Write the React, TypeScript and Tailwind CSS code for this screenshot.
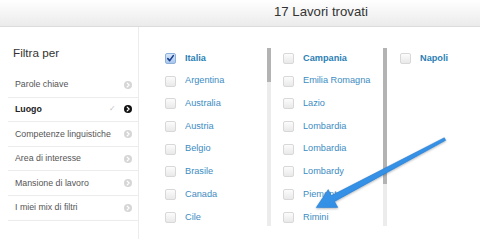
import React from "react";

const font = { fontFamily: '"Liberation Sans", Arial, sans-serif' };

function CircleArrow({ active }: { active?: boolean }) {
  return (
    <svg width="8" height="8" viewBox="0 0 8 8" className="shrink-0">
      <circle cx="4" cy="4" r="4" fill={active ? "#111111" : "#d6d6d6"} />
      <path d="M3.2 2.1 L5.1 4 L3.2 5.9" stroke="#ffffff" strokeWidth="1.3" fill="none" strokeLinecap="round" strokeLinejoin="round" />
    </svg>
  );
}

function Checkbox({ checked }: { checked?: boolean }) {
  if (checked) {
    return (
      <div className="w-[11px] h-[11px] rounded-[2px] border border-[#8fb0d8] bg-gradient-to-b from-[#d6e6f8] to-[#a9c8ee] flex items-center justify-center shrink-0">
        <svg width="9" height="9" viewBox="0 0 9 9">
          <path d="M1.8 4.6 L3.7 6.6 L7.3 1.6" stroke="#1b3d8c" strokeWidth="1.6" fill="none" strokeLinecap="round" strokeLinejoin="round" />
        </svg>
      </div>
    );
  }
  return <div className="w-[11px] h-[11px] rounded-[2px] border border-[#d8d8d8] bg-gradient-to-b from-[#fcfcfc] to-[#e9e9e9] shrink-0" />;
}

function Opt({ label, bold, checked }: { label: string; bold?: boolean; checked?: boolean }) {
  return (
    <div className="h-[22.7px] flex items-center">
      <Checkbox checked={checked} />
      <span className={`ml-[9px] text-[9.2px] leading-none ${bold ? "font-bold text-[#2d7fb5]" : "text-[#3d8cc2]"}`}>{label}</span>
    </div>
  );
}

function Scroll({ thumb }: { thumb: number }) {
  return (
    <div className="w-[4px] mt-[1px] h-[178px] bg-[#ececec] flex flex-col shrink-0">
      <div className="w-full bg-[#b3b3b3]" style={{ height: thumb }} />
    </div>
  );
}

const sideItems = [
  "Parole chiave",
  "Luogo",
  "Competenze linguistiche",
  "Area di interesse",
  "Mansione di lavoro",
  "I miei mix di filtri",
];

export default function App() {
  const col1 = ["Argentina", "Australia", "Austria", "Belgio", "Brasile", "Canada", "Cile"];
  const col2 = ["Emilia Romagna", "Lazio", "Lombardia", "Lombardia", "Lombardy", "Piemonte", "Rimini"];
  return (
    <div className="relative w-[480px] h-[239px] overflow-hidden bg-white" style={font}>
      <div className="h-[27px] bg-gradient-to-b from-[#ffffff] to-[#ebebeb] border-b border-[#dcdcdc] flex items-center pl-[274px]">
        <span className="text-[13.2px] text-[#333333] leading-none -mt-[3px]">17 Lavori trovati</span>
      </div>
      <div className="flex h-[212px]">
        <div className="w-[139px] border-r border-[#ececec] shrink-0">
          <div className="pl-[13px] pt-[19px] h-[46px] text-[11.7px] text-[#333333] leading-[14px]">Filtra per</div>
          <div className="pl-[8px]">
            {sideItems.map((it, i) => (
              <div key={it} className="h-[24.6px] flex items-center pl-[7px] pr-[6px] border-b border-[#ececec]">
                <span className={`flex-1 text-[8.8px] leading-none ${i === 1 ? "font-bold text-[#222222]" : "text-[#555555]"}`}>{it}</span>
                {i === 1 && <span className="text-[8px] text-[#c4c4c4] mr-[8px] leading-none">✓</span>}
                <CircleArrow active={i === 1} />
              </div>
            ))}
          </div>
        </div>
        <div className="flex pt-[20px]">
          <div className="w-[128px] pl-[26px]">
            <Opt label="Italia" bold checked />
            {col1.map((c) => (
              <Opt key={c} label={c} />
            ))}
          </div>
          <Scroll thumb={34} />
          <div className="w-[112px] pl-[12px]">
            <Opt label="Campania" bold />
            {col2.map((c, i) => (
              <Opt key={c + i} label={c} />
            ))}
          </div>
          <Scroll thumb={136} />
          <div className="pl-[13px]">
            <Opt label="Napoli" bold />
          </div>
        </div>
      </div>
      <svg className="absolute inset-0 pointer-events-none" width="480" height="239" viewBox="0 0 480 239">
        <defs>
          <linearGradient id="ag" x1="0" y1="0" x2="1" y2="1">
            <stop offset="0" stopColor="#4aa3f0" />
            <stop offset="1" stopColor="#1f7fdc" />
          </linearGradient>
          <filter id="sh" x="-10%" y="-10%" width="120%" height="130%">
            <feDropShadow dx="0" dy="1" stdDeviation="0.8" floodColor="#000000" floodOpacity="0.3" />
          </filter>
        </defs>
        <polygon
          points="444.3,137.7 331.4,195.6 328.2,189.6 316.2,207.6 337.8,207.4 334.6,201.4 445.7,140.3"
          fill="url(#ag)"
          stroke="#1d72c8"
          strokeWidth="0.5"
          strokeLinejoin="round"
          filter="url(#sh)"
        />
      </svg>
    </div>
  );
}
